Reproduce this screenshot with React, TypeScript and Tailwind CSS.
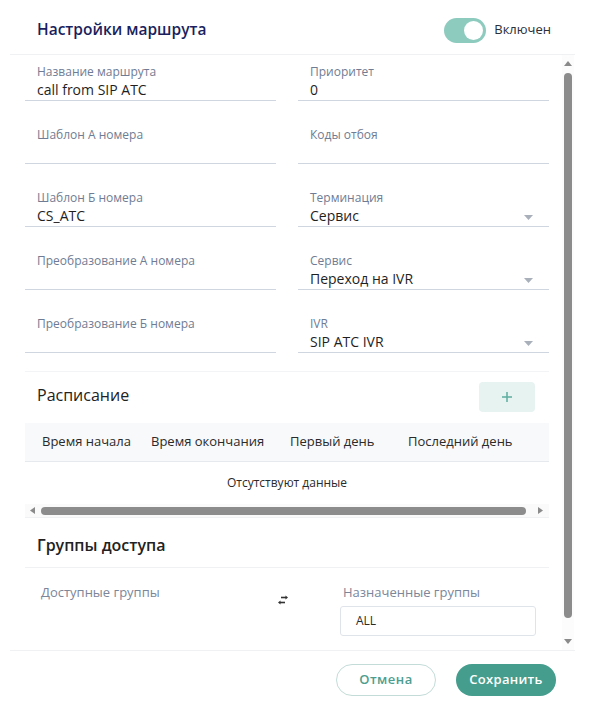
import { useState } from 'react';

type Field = {
  label: string;
  value?: string;
  select?: boolean;
};

const leftFields: Field[] = [
  { label: 'Название маршрута', value: 'call from SIP ATC' },
  { label: 'Шаблон А номера' },
  { label: 'Шаблон Б номера', value: 'CS_ATC' },
  { label: 'Преобразование А номера' },
  { label: 'Преобразование Б номера' },
];

const rightFields: Field[] = [
  { label: 'Приоритет', value: '0' },
  { label: 'Коды отбоя' },
  { label: 'Терминация', value: 'Сервис', select: true },
  { label: 'Сервис', value: 'Переход на IVR', select: true },
  { label: 'IVR', value: 'SIP ATC IVR', select: true },
];

const columns = [
  { title: 'Время начала', w: 'w-[126px] pl-[17px]' },
  { title: 'Время окончания', w: 'w-[139px]' },
  { title: 'Первый день', w: 'w-[118px]' },
  { title: 'Последний день', w: 'flex-1' },
];

function FormField({ f }: { f: Field }) {
  return (
    <div className="flex flex-col border-b border-[#cfd6df]">
      <div className="pl-[12px] text-[12px] leading-4 text-[#6f7c93]">{f.label}</div>
      <div className="h-5 pl-[12px] pr-[16px] flex items-center justify-between">
        <span className="text-[14px] leading-5 text-[#1f1f1f]">{f.value ?? ''}</span>
        {f.select && (
          <svg width="9" height="5" viewBox="0 0 9 5" className="mt-[2px]">
            <path d="M0 0h9L4.5 5z" fill="#a9b0ba" />
          </svg>
        )}
      </div>
    </div>
  );
}

function SwapIcon() {
  return (
    <svg width="12" height="10" viewBox="0 0 12 10">
      <path d="M4 2.5h5" stroke="#333" strokeWidth="1.6" />
      <path d="M8.5 0.5l2.5 2-2.5 2z" fill="#333" />
      <path d="M3 7.5h5" stroke="#333" strokeWidth="1.6" />
      <path d="M3.5 5.5L1 7.5l2.5 2z" fill="#333" />
    </svg>
  );
}

export default function App() {
  const [enabled, setEnabled] = useState(true);

  return (
    <div className="w-[590px] h-[720px] bg-white flex flex-col font-['Open_Sans',sans-serif]">
      {/* header */}
      <div className="h-[55px] ml-[10px] mr-[15px] shrink-0 border-b border-[#f0f1f3] flex items-center justify-between pt-[6px] pl-[27px] pr-[24px]">
        <div className="text-[15.5px] font-semibold text-[#1b1f5e]">Настройки маршрута</div>
        <div className="flex items-center gap-[8px]">
          <button
            onClick={() => setEnabled(v => !v)}
            className={`w-[42px] h-[25px] rounded-full p-[3px] flex ${enabled ? 'bg-[#8ecbbf] justify-end' : 'bg-[#d5d9df] justify-start'}`}
          >
            <span className="w-[19px] h-[19px] rounded-full bg-white" />
          </button>
          <span className="text-[13px] text-[#2b2f3a]">Включен</span>
        </div>
      </div>

      {/* scrolling body */}
      <div className="flex-1 ml-[10px] mr-[16px] flex min-h-0">
        <div className="flex-1 pl-[15px] pr-[13px] pt-[9px] overflow-hidden">
          <div className="grid grid-cols-2 gap-x-[22px] gap-y-[26px]">
            {leftFields.map((f, i) => (
              <div key={f.label} className="contents">
                <FormField f={f} />
                <FormField f={rightFields[i]} />
              </div>
            ))}
          </div>

          {/* schedule */}
          <div className="mt-[18px] border-t border-[#f3f4f6]">
            <div className="h-[51px] flex items-start justify-between pl-[12px] pr-[14px] pt-[10px]">
              <div className="text-[16px] text-[#222] leading-[24px] mt-[1px]">Расписание</div>
              <button className="w-[56px] h-[30px] rounded-[4px] bg-[#e7f3f1] flex items-center justify-center">
                <svg width="10" height="10" viewBox="0 0 10 10">
                  <path d="M5 0v10M0 5h10" stroke="#5eae9f" strokeWidth="1.5" />
                </svg>
              </button>
            </div>
            <div className="h-[39px] bg-[#f8f9fa] border-b border-[#e6e9ed] flex items-center">
              {columns.map(c => (
                <div key={c.title} className={`${c.w} text-[13px] text-[#2a2a2a] whitespace-nowrap`}>{c.title}</div>
              ))}
            </div>
            <div className="h-[42px] flex items-center justify-center text-[12px] text-[#2a2a2a]">Отсутствуют данные</div>
            {/* horizontal scrollbar */}
            <div className="h-[14px] bg-[#fafafa] border-b border-[#f0f1f3] flex items-center pl-[5px] pr-[6px]">
              <svg width="5" height="7" viewBox="0 0 5 7"><path d="M5 0v7L0 3.5z" fill="#8a8a8a" /></svg>
              <div className="flex-1 ml-[6px] mr-[12px] h-[8px] rounded-full bg-[#8c8c8c]" />
              <svg width="5" height="7" viewBox="0 0 5 7"><path d="M0 0v7l5-3.5z" fill="#8a8a8a" /></svg>
            </div>
          </div>

          {/* access groups */}
          <div className="pl-[12px] pt-[15px] pb-[10px] text-[16px] font-semibold text-[#222] leading-[24px] border-b border-[#f0f1f3]">
            Группы доступа
          </div>
          <div className="flex pt-[15px]">
            <div className="w-[248px] pl-[16px] text-[13px] text-[#7b8699]">Доступные группы</div>
            <div className="w-[67px] pt-[12px] pl-[4px]">
              <SwapIcon />
            </div>
            <div className="w-[196px] flex flex-col">
              <div className="pl-[3px] text-[13px] text-[#7b8699] leading-[18px]">Назначенные группы</div>
              <div className="mt-[5px] h-[30px] border border-[#dfe4ea] rounded-[3px] flex items-center pl-[15px] text-[12px] text-[#2a2a2a]">ALL</div>
            </div>
          </div>
        </div>

        {/* vertical scrollbar */}
        <div className="w-[12px] flex flex-col items-center pt-[6px] pb-[6px] bg-[#fcfcfc]">
          <svg width="8" height="5" viewBox="0 0 8 5"><path d="M0 5h8L4 0z" fill="#8a8a8a" /></svg>
          <div className="mt-[7px] w-[8px] h-[545px] rounded-full bg-[#8c8c8c]" />
          <div className="flex-1" />
          <svg width="8" height="5" viewBox="0 0 8 5"><path d="M0 0h8L4 5z" fill="#8a8a8a" /></svg>
        </div>
      </div>

      {/* footer */}
      <div className="h-[70px] ml-[10px] mr-[15px] shrink-0 border-t border-[#f0f1f3] flex items-start justify-end gap-[20px] pt-[13px] pr-[19px]">
        <button className="w-[100px] h-[32px] rounded-full border-[1.5px] border-[#c3dcd7] text-[13px] font-semibold tracking-[0.5px] text-[#4d9e8f]">Отмена</button>
        <button className="w-[100px] h-[32px] rounded-full bg-[#459d8d] text-[13px] font-semibold tracking-[0.3px] text-white">Сохранить</button>
      </div>
    </div>
  );
}
